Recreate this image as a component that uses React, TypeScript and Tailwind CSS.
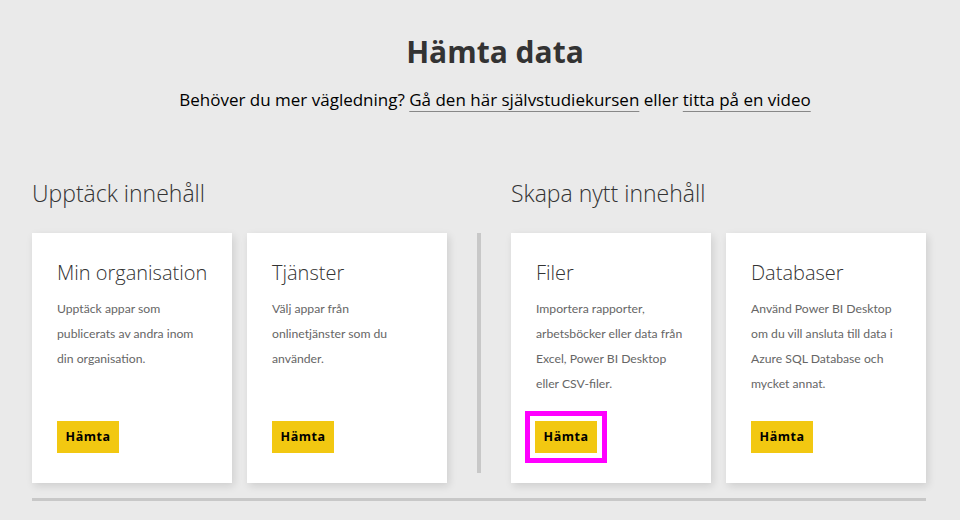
import React from 'react';

interface CardProps {
  title: string;
  lines: string[];
  highlight?: boolean;
}

const Card: React.FC<CardProps> = ({ title, lines, highlight }) => {
  return (
    <div className="w-[200px] h-[250px] bg-white shadow-[2px_3px_8px_rgba(0,0,0,0.12)] flex flex-col pl-[25px] pt-[28px]">
      <h3 className="text-[20px] leading-[24px] text-[#333] font-light">{title}</h3>
      <div
        className="mt-[11px] text-[12.2px] leading-[25px] text-[#666] h-[100px]"
        style={{ fontFamily: 'Lato, "Open Sans", sans-serif' }}
      >
        {lines.map((line) => (
          <div key={line}>{line}</div>
        ))}
      </div>
      <div className={highlight ? 'mt-[15px] -ml-[11px] w-fit border-[5px] border-[#ff00ff] p-[5px]' : 'mt-[25px]'}>
        <button className="w-[62px] h-[32px] bg-[#f2c811] text-[12.5px] font-bold tracking-[0.5px] text-black flex items-center justify-center">
          Hämta
        </button>
      </div>
    </div>
  );
};

export default function App() {
  return (
    <div
      className="w-[960px] h-[520px] bg-[#eaeaea] text-[#333] overflow-hidden"
      style={{ fontFamily: '"Open Sans", "Noto Sans", sans-serif' }}
    >
      {/* Header */}
      <div className="flex flex-col items-center pt-[32px] pl-[30px]">
        <h1 className="text-[30px] leading-[40px] font-bold text-[#333]">Hämta data</h1>
        <p className="mt-[17px] text-[17px] leading-[22px] text-black">
          Behöver du mer vägledning?{' '}
          <span className="underline decoration-[#888] underline-offset-[5px]">Gå den här självstudiekursen</span> eller{' '}
          <span className="underline decoration-[#888] underline-offset-[5px]">titta på en video</span>
        </p>
      </div>

      {/* Sections */}
      <div className="pl-[32px] mt-[67px] flex">
        <div className="flex flex-col">
          <h2 className="text-[23px] leading-[30px] font-light text-[#333]">Upptäck innehåll</h2>
          <div className="mt-[25px] flex gap-[15px]">
            <Card title="Min organisation" lines={['Upptäck appar som', 'publicerats av andra inom', 'din organisation.']} />
            <Card title="Tjänster" lines={['Välj appar från', 'onlinetjänster som du', 'använder.']} />
          </div>
        </div>
        <div className="w-[4px] h-[240px] bg-[#c8c8c8] mt-[55px] mx-[30px]" />
        <div className="flex flex-col">
          <h2 className="text-[23px] leading-[30px] font-light text-[#333]">Skapa nytt innehåll</h2>
          <div className="mt-[25px] flex gap-[15px]">
            <Card
              title="Filer"
              lines={['Importera rapporter,', 'arbetsböcker eller data från', 'Excel, Power BI Desktop', 'eller CSV-filer.']}
              highlight
            />
            <Card
              title="Databaser"
              lines={['Använd Power BI Desktop', 'om du vill ansluta till data i', 'Azure SQL Database och', 'mycket annat.']}
            />
          </div>
        </div>
      </div>

      <div className="ml-[32px] mt-[15px] w-[894px] h-[3px] bg-[#c8c8c8]" />
    </div>
  );
}
